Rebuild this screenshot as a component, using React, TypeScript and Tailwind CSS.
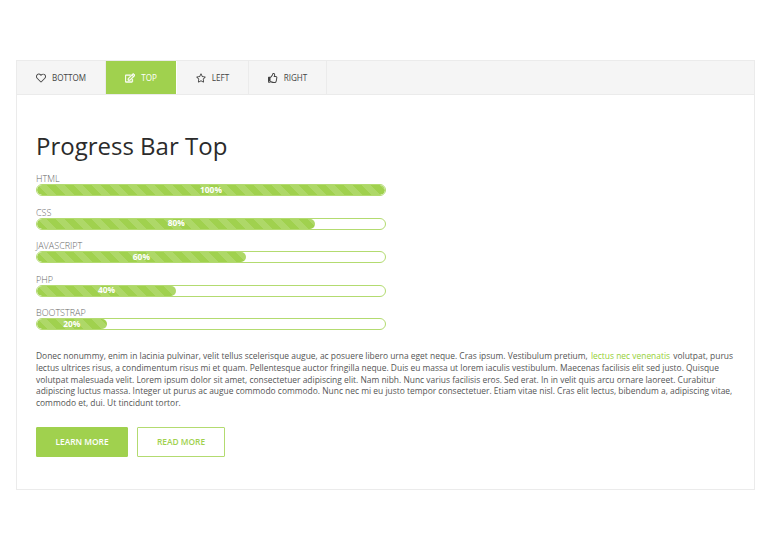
import { FaRegHeart, FaRegEdit, FaRegStar, FaRegThumbsUp } from 'react-icons/fa';

const tabs = [
  { label: 'BOTTOM', icon: FaRegHeart, width: 'w-[89px]' },
  { label: 'TOP', icon: FaRegEdit, width: 'w-[71px]', active: true },
  { label: 'LEFT', icon: FaRegStar, width: 'w-[72px]' },
  { label: 'RIGHT', icon: FaRegThumbsUp, width: 'w-[78px]' },
];

const bars = [
  { label: 'HTML', value: 100 },
  { label: 'CSS', value: 80 },
  { label: 'JAVASCRIPT', value: 60 },
  { label: 'PHP', value: 40 },
  { label: 'BOOTSTRAP', value: 20 },
];

export default function App() {
  return (
    <div className="h-[540px] w-[768px] bg-white pt-[60px] pl-4 font-['Open_Sans',sans-serif]">
      <div className="h-[430px] w-[739px] border border-[#ebebeb]">
        <div className="flex h-[34px] border-b border-[#ebebeb] bg-[#f5f5f5]">
          {tabs.map((tab) => (
            <div
              key={tab.label}
              className={`flex items-center justify-center gap-[6px] border-r text-[8.1px] ${tab.width} ${
                tab.active ? 'border-white bg-[#a0d14e] text-white' : 'border-[#ebebeb] text-[#444]'
              }`}
            >
              <tab.icon className="h-[10px] w-[10px]" strokeWidth={tab.active ? 24 : 0} />
              <span className="pt-[1px]">{tab.label}</span>
            </div>
          ))}
        </div>

        <div className="px-[19px] pt-[34px]">
          <h1 className="text-[24px] leading-[33px] font-medium text-[#2b2b2b]">Progress Bar Top</h1>

          <div className="mt-[10px] flex w-[350px] flex-col gap-[9.6px]">
            {bars.map((bar) => (
              <div key={bar.label}>
                <div className="h-3 text-[9px] leading-[13px] font-light text-[#666]">{bar.label}</div>
                <div className="h-3 overflow-hidden rounded-full border border-[#b3db70] bg-white">
                  <div
                    className="flex h-full items-center justify-center rounded-full bg-[#a0d14e] bg-[linear-gradient(45deg,rgba(255,255,255,0.15)_25%,transparent_25%,transparent_50%,rgba(255,255,255,0.15)_50%,rgba(255,255,255,0.15)_75%,transparent_75%,transparent)] bg-[length:18px_18px] text-[8.4px] font-bold text-white"
                    style={{ width: `${bar.value}%` }}
                  >
                    {bar.value}%
                  </div>
                </div>
              </div>
            ))}
          </div>

          <p className="mt-[20px] w-[700px] text-[8.43px] leading-[11.7px] text-[#555]">
            Donec nonummy, enim in lacinia pulvinar, velit tellus scelerisque augue, ac posuere libero urna eget neque. Cras ipsum. Vestibulum pretium,{' '}
            <a className="px-[1px] text-[#96d035]">lectus nec venenatis</a> volutpat, purus lectus ultrices risus, a condimentum risus mi et quam. Pellentesque auctor fringilla neque. Duis eu massa ut lorem iaculis vestibulum. Maecenas facilisis elit sed justo. Quisque volutpat malesuada velit. Lorem ipsum dolor sit amet, consectetuer adipiscing elit. Nam nibh. Nunc varius facilisis eros. Sed erat. In in velit quis arcu ornare laoreet. Curabitur adipiscing luctus massa. Integer ut purus ac augue commodo commodo. Nunc nec mi eu justo tempor consectetuer. Etiam vitae nisl. Cras elit lectus, bibendum a, adipiscing vitae, commodo et, dui. Ut tincidunt tortor.
          </p>

          <div className="mt-[18.5px] flex gap-[9px]">
            <button className="h-[30px] w-[92px] rounded-[1px] border border-[#a0d14e] bg-[#a0d14e] text-[8.4px] font-semibold text-white">LEARN MORE</button>
            <button className="h-[30px] w-[88px] rounded-[1px] border border-[#b3db70] bg-white text-[8.4px] font-semibold text-[#a0d14e]">READ MORE</button>
          </div>
        </div>
      </div>
    </div>
  );
}
